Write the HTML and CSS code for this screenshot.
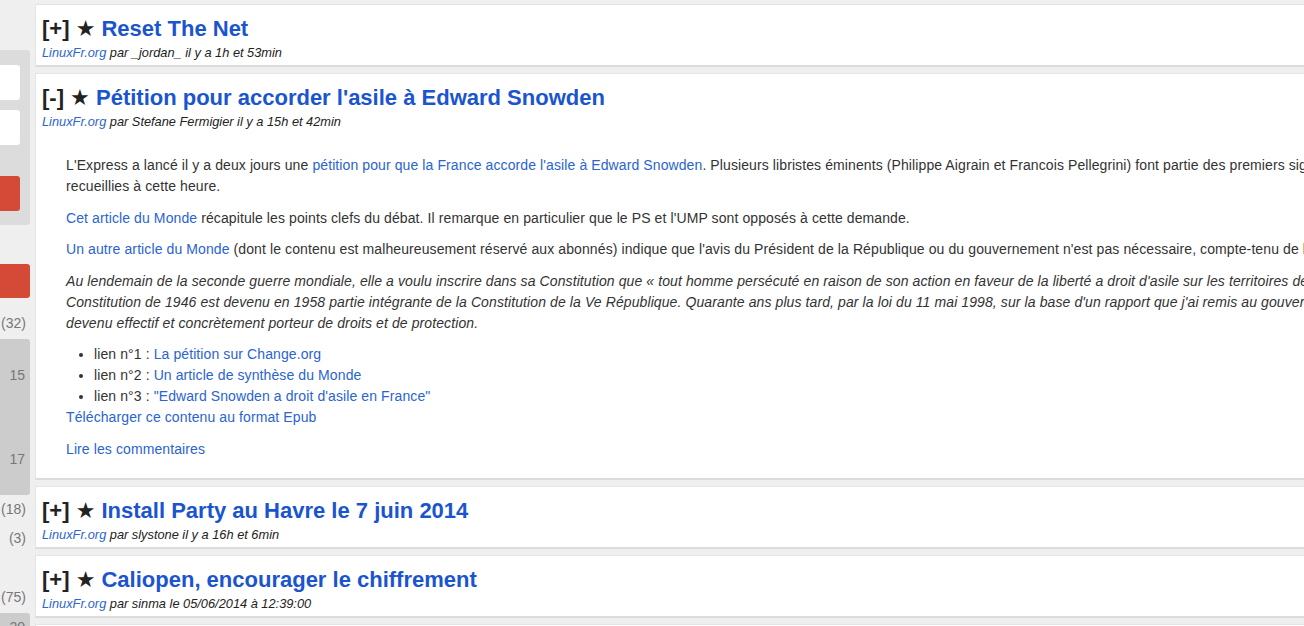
FILE: index.html
```html
<!DOCTYPE html>
<html lang="fr">
<head>
<meta charset="utf-8">
<title>LinuxFr.org</title>
<link rel="stylesheet" href="styles.css">
</head>
<body>
<div class="page">
  <aside class="sidebar">
    <div class="box box-form">
      <div class="field"></div>
      <div class="field field-second"></div>
      <div class="btn btn-small"></div>
    </div>
    <div class="btn btn-wide"></div>
    <div class="count count-32">(32)</div>
    <div class="box box-votes">
      <div class="vote">15</div>
      <div class="vote vote-second">17</div>
    </div>
    <div class="count count-18">(18)</div>
    <div class="count count-3">(3)</div>
    <div class="count count-75">(75)</div>
    <div class="box box-votes box-last">
      <div class="vote">20</div>
    </div>
  </aside>

  <main class="main">
    <article class="card">
      <h2 class="title"><span class="toggle">[+]</span> <span class="star">★</span> <a href="#" class="title-link">Reset The Net</a></h2>
      <div class="meta"><a href="#">LinuxFr.org</a> par _jordan_ il y a 1h et 53min</div>
    </article>

    <article class="card">
      <h2 class="title"><span class="toggle">[-]</span> <span class="star">★</span> <a href="#" class="title-link">Pétition pour accorder l'asile à Edward Snowden</a></h2>
      <div class="meta"><a href="#">LinuxFr.org</a> par Stefane Fermigier il y a 15h et 42min</div>
      <div class="content">
        <p>L'Express a lancé il y a deux jours une <a href="#">pétition pour que la France accorde l'asile à Edward Snowden</a>. Plusieurs libristes éminents (Philippe Aigrain et Francois Pellegrini) font partie des premiers signataires. Plus de 100 000 signatures ont été<br>recueillies à cette heure.</p>
        <p><a href="#">Cet article du Monde</a> récapitule les points clefs du débat. Il remarque en particulier que le PS et l'UMP sont opposés à cette demande.</p>
        <p><a href="#">Un autre article du Monde</a> (dont le contenu est malheureusement réservé aux abonnés) indique que l'avis du Président de la République ou du gouvernement n'est pas nécessaire, compte-tenu de la Constitution française :</p>
        <blockquote>Au lendemain de la seconde guerre mondiale, elle a voulu inscrire dans sa Constitution que « tout homme persécuté en raison de son action en faveur de la liberté a droit d'asile sur les territoires de la République ». Ce principe inscrit dans le Préambule de la<br>Constitution de 1946 est devenu en 1958 partie intégrante de la Constitution de la Ve République. Quarante ans plus tard, par la loi du 11 mai 1998, sur la base d'un rapport que j'ai remis au gouvernement, ce droit est enfin<br>devenu effectif et concrètement porteur de droits et de protection.</blockquote>
        <ul class="links">
          <li>lien n°1 : <a href="#">La pétition sur Change.org</a></li>
          <li>lien n°2 : <a href="#">Un article de synthèse du Monde</a></li>
          <li>lien n°3 : <a href="#">"Edward Snowden a droit d'asile en France"</a></li>
        </ul>
        <div class="epub"><a href="#">Télécharger ce contenu au format Epub</a></div>
        <div class="comments"><a href="#">Lire les commentaires</a></div>
      </div>
    </article>

    <article class="card">
      <h2 class="title"><span class="toggle">[+]</span> <span class="star">★</span> <a href="#" class="title-link">Install Party au Havre le 7 juin 2014</a></h2>
      <div class="meta"><a href="#">LinuxFr.org</a> par slystone il y a 16h et 6min</div>
    </article>

    <article class="card">
      <h2 class="title"><span class="toggle">[+]</span> <span class="star">★</span> <a href="#" class="title-link">Caliopen, encourager le chiffrement</a></h2>
      <div class="meta"><a href="#">LinuxFr.org</a> par sinma le 05/06/2014 à 12:39:00</div>
    </article>

    <article class="card">
      <h2 class="title"><span class="toggle">[+]</span> <span class="star">★</span> <a href="#" class="title-link">Suite</a></h2>
    </article>
  </main>
</div>
</body>
</html>
```

FILE: styles.css
```css
html, body {
  margin: 0;
  padding: 0;
}

body {
  background: #efefef;
  font-family: "Liberation Sans", Arial, sans-serif;
  font-size: 14px;
  color: #333;
  overflow: hidden;
  height: 626px;
}

a {
  color: #2a64d0;
  text-decoration: none;
}

.page {
  display: flex;
  align-items: flex-start;
  padding-top: 4px;
  width: 2600px;
}

/* Sidebar (clipped on the left) */
.sidebar {
  width: 35px;
  flex: none;
  display: flex;
  flex-direction: column;
}

.box {
  width: 30px;
  border-radius: 0 3px 3px 0;
  box-sizing: border-box;
}

.box-form {
  margin-top: 46px;
  height: 175px;
  background: #dcdcdc;
  padding-top: 15px;
}

.field {
  width: 20px;
  height: 35px;
  background: #fff;
  border-radius: 0 3px 3px 0;
}

.field-second {
  margin-top: 10px;
}

.btn {
  background: #d44a37;
  border-radius: 0 3px 3px 0;
}

.btn-small {
  width: 20px;
  height: 35px;
  margin-top: 31px;
}

.btn-wide {
  width: 30px;
  height: 34px;
  margin-top: 39px;
}

.count {
  width: 26px;
  text-align: right;
  color: #777;
  font-size: 14px;
  line-height: 16px;
}

.count-32 { margin-top: 17px; }
.count-18 { margin-top: 6px; }
.count-3 { margin-top: 13px; }
.count-75 { margin-top: 43px; }

.box-votes {
  background: #cccccc;
  margin-top: 8px;
  height: 156px;
  padding-top: 28px;
}

.box-last {
  height: 40px;
  padding-top: 6px;
}

.vote {
  width: 25px;
  text-align: right;
  color: #777;
  line-height: 16px;
}

.vote-second {
  margin-top: 68px;
}

/* Main column */
.main {
  flex: none;
  width: 2500px;
}

.card {
  background: #fff;
  border: 1px solid #e4e4e4;
  border-bottom: 2px solid #dcdcdc;
  margin-bottom: 6px;
  padding: 11px 6px 4px;
}

.title {
  margin: 0 0 2px;
  font-size: 22px;
  line-height: 26px;
  font-weight: bold;
  white-space: nowrap;
}

.toggle,
.star {
  color: #222;
}

.star {
  font-family: "DejaVu Sans", sans-serif;
  font-size: 22px;
}

.title-link {
  color: #1a55cf;
}

.meta {
  font-size: 12.8px;
  line-height: 17px;
  font-style: italic;
  color: #222;
  white-space: nowrap;
}

.content {
  padding: 25px 0 14px 24px;
  line-height: 21px;
  letter-spacing: 0.1px;
  white-space: nowrap;
}

.content p {
  margin: 0 0 10.5px;
}

.content blockquote {
  margin: 0 0 10.5px;
  font-style: italic;
}

.links {
  margin: 0;
  padding-left: 28px;
}

.comments {
  margin-top: 11px;
}
```
